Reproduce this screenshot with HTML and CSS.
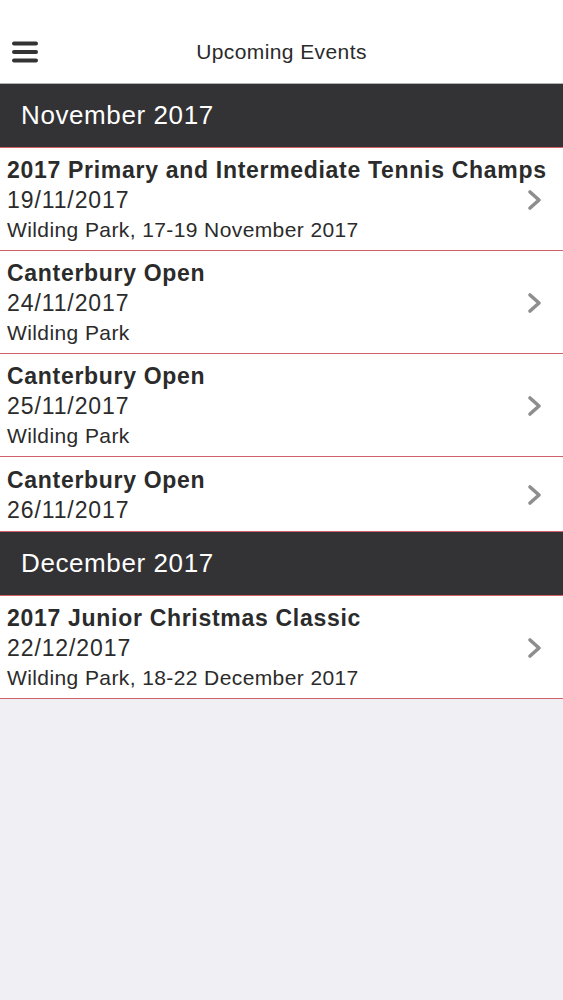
FILE: index.html
```html
<!DOCTYPE html>
<html lang="en">
<head>
<meta charset="utf-8">
<title>Upcoming Events</title>
<link rel="stylesheet" href="styles.css">
</head>
<body>
<header class="topbar">
  <button class="menu" aria-label="Menu">
    <svg width="26" height="22" viewBox="0 0 26 22"><g stroke="#333" stroke-width="4" stroke-linecap="round"><line x1="2" y1="2.5" x2="24" y2="2.5"/><line x1="2" y1="11" x2="24" y2="11"/><line x1="2" y1="19.5" x2="24" y2="19.5"/></g></svg>
  </button>
  <h1 class="title">Upcoming Events</h1>
  <span></span>
</header>

<section>
  <h2 class="month">November 2017</h2>
  <a class="event">
    <div class="info">
      <div class="name">2017 Primary and Intermediate Tennis Champs</div>
      <div class="date">19/11/2017</div>
      <div class="place">Wilding Park, 17-19 November 2017</div>
    </div>
    <svg class="chev" width="16" height="22" viewBox="0 0 16 22"><path d="M3 3 L12 11 L3 19" fill="none" stroke="#8e8e8e" stroke-width="3.6" stroke-linecap="round" stroke-linejoin="round"/></svg>
  </a>
  <a class="event">
    <div class="info">
      <div class="name">Canterbury Open</div>
      <div class="date">24/11/2017</div>
      <div class="place">Wilding Park</div>
    </div>
    <svg class="chev" width="16" height="22" viewBox="0 0 16 22"><path d="M3 3 L12 11 L3 19" fill="none" stroke="#8e8e8e" stroke-width="3.6" stroke-linecap="round" stroke-linejoin="round"/></svg>
  </a>
  <a class="event">
    <div class="info">
      <div class="name">Canterbury Open</div>
      <div class="date">25/11/2017</div>
      <div class="place">Wilding Park</div>
    </div>
    <svg class="chev" width="16" height="22" viewBox="0 0 16 22"><path d="M3 3 L12 11 L3 19" fill="none" stroke="#8e8e8e" stroke-width="3.6" stroke-linecap="round" stroke-linejoin="round"/></svg>
  </a>
  <a class="event">
    <div class="info">
      <div class="name">Canterbury Open</div>
      <div class="date">26/11/2017</div>
    </div>
    <svg class="chev" width="16" height="22" viewBox="0 0 16 22"><path d="M3 3 L12 11 L3 19" fill="none" stroke="#8e8e8e" stroke-width="3.6" stroke-linecap="round" stroke-linejoin="round"/></svg>
  </a>
</section>

<section>
  <h2 class="month">December 2017</h2>
  <a class="event">
    <div class="info">
      <div class="name">2017 Junior Christmas Classic</div>
      <div class="date">22/12/2017</div>
      <div class="place">Wilding Park, 18-22 December 2017</div>
    </div>
    <svg class="chev" width="16" height="22" viewBox="0 0 16 22"><path d="M3 3 L12 11 L3 19" fill="none" stroke="#8e8e8e" stroke-width="3.6" stroke-linecap="round" stroke-linejoin="round"/></svg>
  </a>
</section>
</body>
</html>
```

FILE: styles.css
```css
* { box-sizing: border-box; }

html, body {
  margin: 0;
  padding: 0;
  background: #f0eff4;
  font-family: "Liberation Sans", Arial, sans-serif;
  color: #2b2b2b;
}

.topbar {
  display: grid;
  grid-template-columns: 1fr auto 1fr;
  align-items: center;
  height: 84px;
  padding-top: 21px;
  background: #fff;
  border-bottom: 1px solid #b4b4b4;
}

.menu {
  justify-self: start;
  margin-left: 12px;
  padding: 0;
  border: 0;
  background: none;
  display: flex;
  align-items: center;
}

.title {
  margin: 0;
  font-size: 21px;
  font-weight: normal;
  letter-spacing: 0.4px;
  color: #2b2b2b;
}

.month {
  margin: 0;
  height: 64px;
  padding-left: 21px;
  display: flex;
  align-items: center;
  background: #333234;
  border-bottom: 1px solid #d0606b;
  color: #fff;
  font-size: 26px;
  font-weight: normal;
  letter-spacing: 0.6px;
}

.event {
  display: flex;
  align-items: center;
  min-height: 75px;
  background: #fff;
  padding: 7px 20px 5px 7px;
  border-bottom: 1px solid #d0606b;
}

.info {
  flex: 1;
  min-width: 0;
  line-height: 30px;
}

.name {
  font-weight: bold;
  font-size: 23px;
  letter-spacing: 0.7px;
  white-space: nowrap;
}

.date {
  font-size: 23px;
  letter-spacing: 0.9px;
}

.place {
  font-size: 21px;
  letter-spacing: 0.4px;
}

.chev {
  flex: none;
}
```
